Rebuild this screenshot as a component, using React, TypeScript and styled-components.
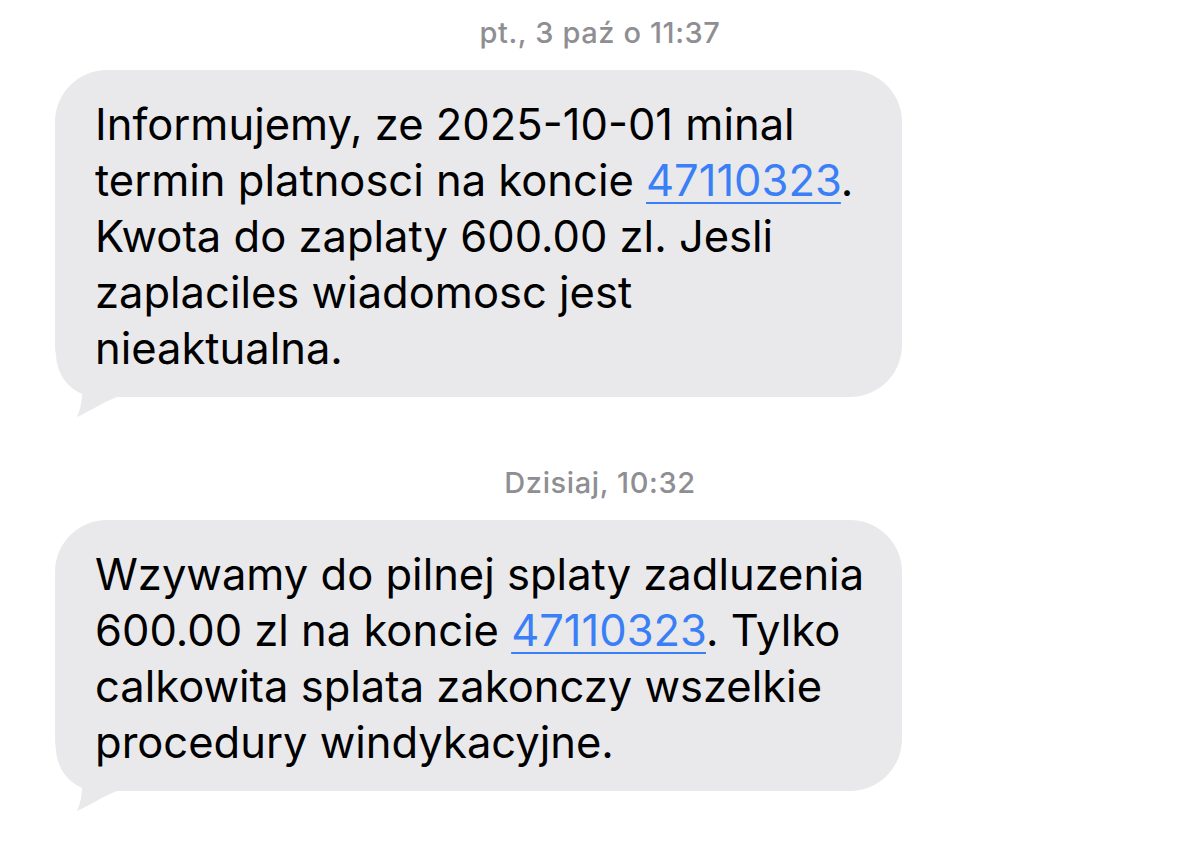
import { FC } from 'react'
import styled, { createGlobalStyle } from 'styled-components'

const GlobalStyle = createGlobalStyle`
  html, body {
    margin: 0;
    padding: 0;
    background: #ffffff;
  }
  body {
    font-family: Inter, "Noto Sans", "Liberation Sans", sans-serif;
    -webkit-font-smoothing: antialiased;
  }
`

interface MessageProps {
  time: string
  children: React.ReactNode
}

const Message: FC<MessageProps> = ({ time, children }) => (
  <Group>
    <Stamp>{time}</Stamp>
    <Bubble>
      <BubbleText>{children}</BubbleText>
      <Tail viewBox="0 0 70 60" aria-hidden>
        <path
          d="M1 0 C3 18 12 30 27 37 C27 45 25 53 22 60 C34 55 46 46 62 40 L70 40 L70 0 Z"
          fill="#e9e9eb"
        />
      </Tail>
    </Bubble>
  </Group>
)

const App: FC = () => (
  <>
    <GlobalStyle />
    <Thread>
      <Message time="pt., 3 paź o 11:37">
        Informujemy, ze 2025-10-01 minal
        <br />
        termin platnosci na koncie <Link>47110323</Link>.
        <br />
        Kwota do zaplaty 600.00 zl. Jesli
        <br />
        zaplaciles wiadomosc jest
        <br />
        nieaktualna.
      </Message>
      <Message time="Dzisiaj, 10:32">
        Wzywamy do pilnej splaty zadluzenia
        <br />
        600.00 zl na koncie <Link>47110323</Link>. Tylko
        <br />
        calkowita splata zakonczy wszelkie
        <br />
        procedury windykacyjne.
      </Message>
    </Thread>
  </>
)

const Thread = styled.div`
  display: flex;
  flex-direction: column;
  gap: 69px;
  padding-top: 16px;
  width: 1200px;
  height: 846px;
  box-sizing: border-box;
  overflow: hidden;
`

const Group = styled.div`
  display: flex;
  flex-direction: column;
`

const Stamp = styled.div`
  text-align: center;
  font-size: 29px;
  font-weight: 500;
  letter-spacing: 0.6px;
  line-height: 34px;
  color: #8e8e93;
  margin-bottom: 20px;
`

const Bubble = styled.div`
  position: relative;
  margin-left: 55px;
  width: 847px;
  box-sizing: border-box;
  padding: 26px 40px 21px 40px;
  background: #e9e9eb;
  border-radius: 52px;
`

const BubbleText = styled.p`
  position: relative;
  z-index: 1;
  margin: 0;
  font-size: 43.5px;
  line-height: 56px;
  color: #000000;
  white-space: nowrap;
`

const Link = styled.span`
  color: #3a7ff6;
  text-decoration: underline;
  text-decoration-thickness: 2px;
  text-underline-offset: 6px;
`

const Tail = styled.svg`
  position: absolute;
  left: 0;
  bottom: -20px;
  width: 70px;
  height: 60px;
`

export default App
